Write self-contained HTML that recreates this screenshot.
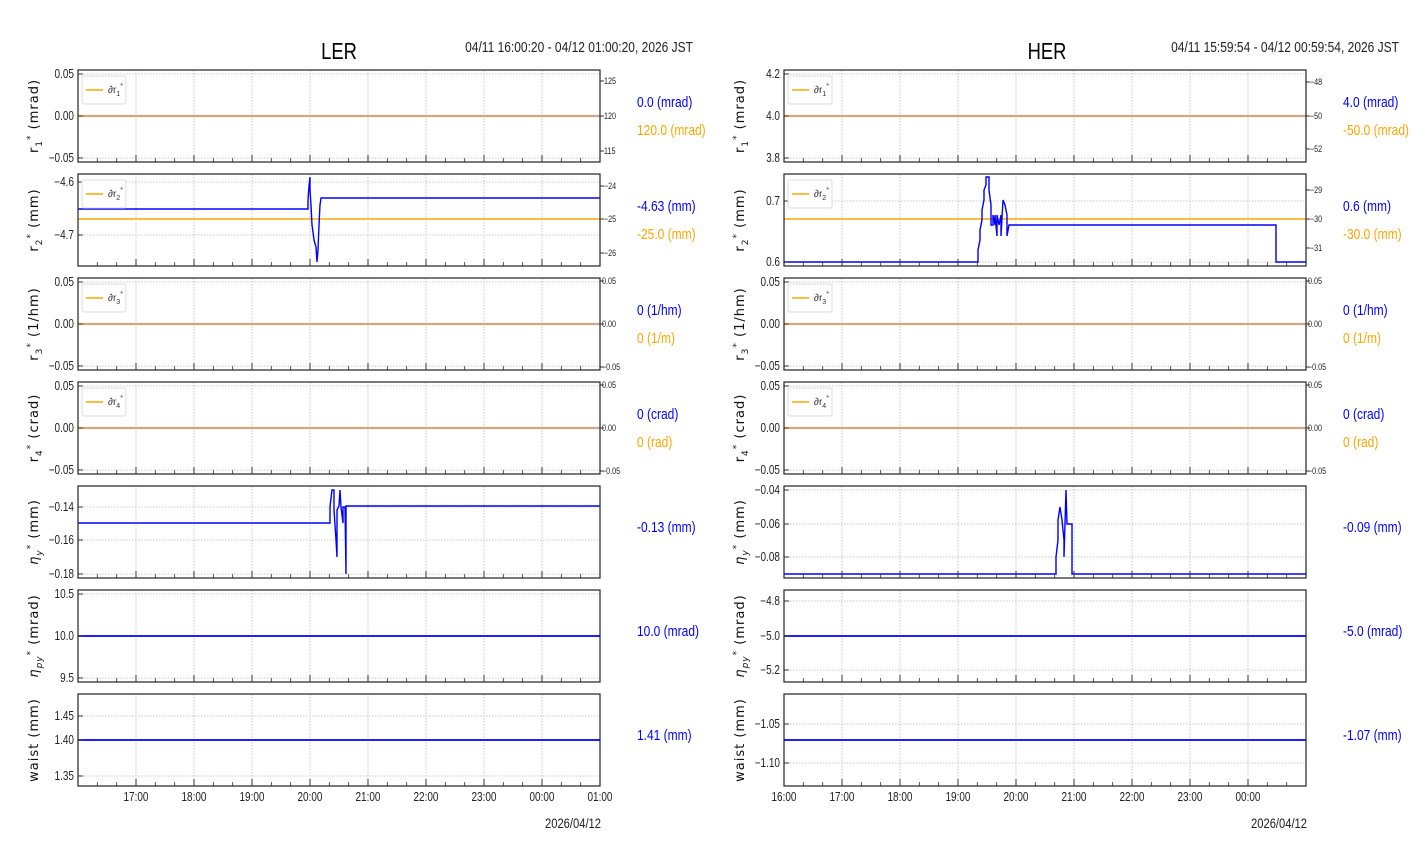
<!DOCTYPE html>
<html><head><meta charset="utf-8"><style>
html,body{margin:0;padding:0;background:#fff;}
svg{display:block;font-family:"Liberation Sans",sans-serif;}
text.t,.t text{font-size:12.5px;fill:#222;}
.e text{transform:scaleX(.8);transform-box:fill-box;transform-origin:right center;}
.m text{transform:scaleX(.8);transform-box:fill-box;transform-origin:center center;}
.st text,text.st{transform:scaleX(.8);transform-box:fill-box;transform-origin:left center;}
.er{transform:scaleX(.8);transform-box:fill-box;transform-origin:right center;}
.mc{transform:scaleX(.8);transform-box:fill-box;transform-origin:center center;}
.s text{font-size:9px;fill:#222;}
.yl{font-size:13px;fill:#111;font-family:"DejaVu Sans","Liberation Sans",sans-serif;letter-spacing:1px;}
.b{font-size:15px;fill:#0000ff;}
.o{font-size:15px;fill:#ffa500;}
.lg{font-size:10px;fill:#333;}
</style></head><body>
<svg id="s" width="1412" height="864" viewBox="0 0 1412 864" xmlns="http://www.w3.org/2000/svg">
<g id="grid"></g>
<text x="339" y="59" text-anchor="middle" class="mc" style="font-size:23px" fill="#000">LER</text>
<text x="693" y="52" text-anchor="end" class="er" style="font-size:15px" fill="#222">04/11 16:00:20 - 04/12 01:00:20, 2026 JST</text>
<text x="1047" y="59" text-anchor="middle" class="mc" style="font-size:23px" fill="#000">HER</text>
<text x="1399" y="52" text-anchor="end" class="er" style="font-size:15px" fill="#222">04/11 15:59:54 - 04/12 00:59:54, 2026 JST</text>

<g fill="none" stroke-width="1.4">
<path d="M78,116H600" stroke="#ffa500" stroke-width="2.5" opacity=".5"/><path d="M78,116H600" stroke="#0000ff" stroke-width="0.8" opacity=".5"/>
<path d="M78,219H600" stroke="#ffa500"/>
<path d="M78,209H308V200L309,186L310,177V190L311,205L312,225L313,232L314,240L316,247L317,262L318,250L319,225L320,205L321,198H600" stroke="#0000ff"/>
<path d="M78,324H600" stroke="#ffa500" stroke-width="2.5" opacity=".5"/><path d="M78,324H600" stroke="#0000ff" stroke-width="0.8" opacity=".5"/>
<path d="M78,428H600" stroke="#ffa500" stroke-width="2.5" opacity=".5"/><path d="M78,428H600" stroke="#0000ff" stroke-width="0.8" opacity=".5"/>
<path d="M78,523H330V507L332,490H334V510L336,540L337,557V510L339,506L340,490L341,507L343,523V507L345,507L346,574V506H600" stroke="#0000ff"/>
<path d="M78,636H600" stroke="#0000ff" stroke-width="1.8"/>
<path d="M78,740H600" stroke="#0000ff" stroke-width="1.8"/>
<path d="M784,116H1306" stroke="#ffa500" stroke-width="2.5" opacity=".5"/><path d="M784,116H1306" stroke="#0000ff" stroke-width="0.8" opacity=".5"/>
<path d="M784,219H1306" stroke="#ffa500"/>
<path d="M784,262H978V250L980,240V230L982,220V210L984,200V190L986,185V177L989,177V190L991,205V225L993,225V215L995,225V215L997,236V215L999,225L1001,215V236L1003,200L1005,205L1007,215V236L1009,225H1276V262H1306" stroke="#0000ff"/>
<path d="M784,324H1306" stroke="#ffa500" stroke-width="2.5" opacity=".5"/><path d="M784,324H1306" stroke="#0000ff" stroke-width="0.8" opacity=".5"/>
<path d="M784,428H1306" stroke="#ffa500" stroke-width="2.5" opacity=".5"/><path d="M784,428H1306" stroke="#0000ff" stroke-width="0.8" opacity=".5"/>
<path d="M784,574H1056V557L1058,540V520L1060,507L1062,520L1064,540V557L1066,490L1067,524H1072V574H1306" stroke="#0000ff"/>
<path d="M784,636H1306" stroke="#0000ff" stroke-width="1.8"/>
<path d="M784,740H1306" stroke="#0000ff" stroke-width="1.8"/>
</g>
<g id="frames"></g>

<g>
<rect x="82" y="76" width="44" height="28" rx="2" fill="#fff" stroke="#ddd"/><path d="M86,90H103" stroke="#ffa500" stroke-width="1.5"/><text x="108" y="93" class="lg">∂r<tspan dy="3" font-size="7">1</tspan><tspan dy="-8" font-size="7">*</tspan></text>
<rect x="82" y="180" width="44" height="28" rx="2" fill="#fff" stroke="#ddd"/><path d="M86,194H103" stroke="#ffa500" stroke-width="1.5"/><text x="108" y="197" class="lg">∂r<tspan dy="3" font-size="7">2</tspan><tspan dy="-8" font-size="7">*</tspan></text>
<rect x="82" y="284" width="44" height="28" rx="2" fill="#fff" stroke="#ddd"/><path d="M86,298H103" stroke="#ffa500" stroke-width="1.5"/><text x="108" y="301" class="lg">∂r<tspan dy="3" font-size="7">3</tspan><tspan dy="-8" font-size="7">*</tspan></text>
<rect x="82" y="388" width="44" height="28" rx="2" fill="#fff" stroke="#ddd"/><path d="M86,402H103" stroke="#ffa500" stroke-width="1.5"/><text x="108" y="405" class="lg">∂r<tspan dy="3" font-size="7">4</tspan><tspan dy="-8" font-size="7">*</tspan></text>
<rect x="788" y="76" width="44" height="28" rx="2" fill="#fff" stroke="#ddd"/><path d="M792,90H809" stroke="#ffa500" stroke-width="1.5"/><text x="814" y="93" class="lg">∂r<tspan dy="3" font-size="7">1</tspan><tspan dy="-8" font-size="7">*</tspan></text>
<rect x="788" y="180" width="44" height="28" rx="2" fill="#fff" stroke="#ddd"/><path d="M792,194H809" stroke="#ffa500" stroke-width="1.5"/><text x="814" y="197" class="lg">∂r<tspan dy="3" font-size="7">2</tspan><tspan dy="-8" font-size="7">*</tspan></text>
<rect x="788" y="284" width="44" height="28" rx="2" fill="#fff" stroke="#ddd"/><path d="M792,298H809" stroke="#ffa500" stroke-width="1.5"/><text x="814" y="301" class="lg">∂r<tspan dy="3" font-size="7">3</tspan><tspan dy="-8" font-size="7">*</tspan></text>
<rect x="788" y="388" width="44" height="28" rx="2" fill="#fff" stroke="#ddd"/><path d="M792,402H809" stroke="#ffa500" stroke-width="1.5"/><text x="814" y="405" class="lg">∂r<tspan dy="3" font-size="7">4</tspan><tspan dy="-8" font-size="7">*</tspan></text>
</g>

<g class="t e" text-anchor="end">
<text x="74" y="78">0.05</text><text x="74" y="120">0.00</text><text x="74" y="162">−0.05</text>
<text x="74" y="186">−4.6</text><text x="74" y="239">−4.7</text>
<text x="74" y="286">0.05</text><text x="74" y="328">0.00</text><text x="74" y="370">−0.05</text>
<text x="74" y="390">0.05</text><text x="74" y="432">0.00</text><text x="74" y="474">−0.05</text>
<text x="74" y="511">−0.14</text><text x="74" y="544">−0.16</text><text x="74" y="578">−0.18</text>
<text x="74" y="598">10.5</text><text x="74" y="640">10.0</text><text x="74" y="682">9.5</text>
<text x="74" y="720">1.45</text><text x="74" y="744">1.40</text><text x="74" y="780">1.35</text>
<text x="780" y="78">4.2</text><text x="780" y="120">4.0</text><text x="780" y="162">3.8</text>
<text x="780" y="205">0.7</text><text x="780" y="266">0.6</text>
<text x="780" y="286">0.05</text><text x="780" y="328">0.00</text><text x="780" y="370">−0.05</text>
<text x="780" y="390">0.05</text><text x="780" y="432">0.00</text><text x="780" y="474">−0.05</text>
<text x="780" y="494">−0.04</text><text x="780" y="528">−0.06</text><text x="780" y="561">−0.08</text>
<text x="780" y="605">−4.8</text><text x="780" y="640">−5.0</text><text x="780" y="674">−5.2</text>
<text x="780" y="728">−1.05</text><text x="780" y="767">−1.10</text>
</g>
<g class="s st">
<text x="604" y="84">125</text><text x="604" y="119">120</text><text x="604" y="154">115</text>
<text x="604" y="189">−24</text><text x="604" y="222">−25</text><text x="604" y="256">−26</text>
<text x="602" y="284">0.05</text><text x="602" y="327">0.00</text><text x="602" y="370">−0.05</text>
<text x="602" y="388">0.05</text><text x="602" y="431">0.00</text><text x="602" y="474">−0.05</text>
<text x="1310" y="85">−48</text><text x="1310" y="119">−50</text><text x="1310" y="152">−52</text>
<text x="1310" y="193">−29</text><text x="1310" y="222">−30</text><text x="1310" y="251">−31</text>
<text x="1308" y="284">0.05</text><text x="1308" y="327">0.00</text><text x="1308" y="370">−0.05</text>
<text x="1308" y="388">0.05</text><text x="1308" y="431">0.00</text><text x="1308" y="474">−0.05</text>
</g>
<g class="t m" text-anchor="middle">
<text x="136" y="801">17:00</text><text x="194" y="801">18:00</text><text x="252" y="801">19:00</text><text x="310" y="801">20:00</text><text x="368" y="801">21:00</text><text x="426" y="801">22:00</text><text x="484" y="801">23:00</text><text x="542" y="801">00:00</text><text x="600" y="801">01:00</text>
<text x="784" y="801">16:00</text><text x="842" y="801">17:00</text><text x="900" y="801">18:00</text><text x="958" y="801">19:00</text><text x="1016" y="801">20:00</text><text x="1074" y="801">21:00</text><text x="1132" y="801">22:00</text><text x="1190" y="801">23:00</text><text x="1248" y="801">00:00</text>
</g>
<g class="t e">
<text x="601" y="828" text-anchor="end" style="font-size:14px">2026/04/12</text>
<text x="1307" y="828" text-anchor="end" style="font-size:14px">2026/04/12</text>
</g>

<g class="yl" text-anchor="middle">
<text transform="translate(38,116) rotate(-90)">r<tspan dy="4" font-size="9">1</tspan><tspan dy="-9" font-size="9">*</tspan><tspan dy="5"> (mrad)</tspan></text>
<text transform="translate(38,220) rotate(-90)">r<tspan dy="4" font-size="9">2</tspan><tspan dy="-9" font-size="9">*</tspan><tspan dy="5"> (mm)</tspan></text>
<text transform="translate(38,324) rotate(-90)">r<tspan dy="4" font-size="9">3</tspan><tspan dy="-9" font-size="9">*</tspan><tspan dy="5"> (1/hm)</tspan></text>
<text transform="translate(38,428) rotate(-90)">r<tspan dy="4" font-size="9">4</tspan><tspan dy="-9" font-size="9">*</tspan><tspan dy="5"> (crad)</tspan></text>
<text transform="translate(38,532) rotate(-90)"><tspan font-style="italic">η</tspan><tspan dy="4" font-size="9" font-style="italic">y</tspan><tspan dy="-9" font-size="9">*</tspan><tspan dy="5"> (mm)</tspan></text>
<text transform="translate(38,636) rotate(-90)"><tspan font-style="italic">η</tspan><tspan dy="4" font-size="9" font-style="italic">py</tspan><tspan dy="-9" font-size="9">*</tspan><tspan dy="5"> (mrad)</tspan></text>
<text transform="translate(38,740) rotate(-90)">waist (mm)</text>
<text transform="translate(744,116) rotate(-90)">r<tspan dy="4" font-size="9">1</tspan><tspan dy="-9" font-size="9">*</tspan><tspan dy="5"> (mrad)</tspan></text>
<text transform="translate(744,220) rotate(-90)">r<tspan dy="4" font-size="9">2</tspan><tspan dy="-9" font-size="9">*</tspan><tspan dy="5"> (mm)</tspan></text>
<text transform="translate(744,324) rotate(-90)">r<tspan dy="4" font-size="9">3</tspan><tspan dy="-9" font-size="9">*</tspan><tspan dy="5"> (1/hm)</tspan></text>
<text transform="translate(744,428) rotate(-90)">r<tspan dy="4" font-size="9">4</tspan><tspan dy="-9" font-size="9">*</tspan><tspan dy="5"> (crad)</tspan></text>
<text transform="translate(744,532) rotate(-90)"><tspan font-style="italic">η</tspan><tspan dy="4" font-size="9" font-style="italic">y</tspan><tspan dy="-9" font-size="9">*</tspan><tspan dy="5"> (mm)</tspan></text>
<text transform="translate(744,636) rotate(-90)"><tspan font-style="italic">η</tspan><tspan dy="4" font-size="9" font-style="italic">py</tspan><tspan dy="-9" font-size="9">*</tspan><tspan dy="5"> (mrad)</tspan></text>
<text transform="translate(744,740) rotate(-90)">waist (mm)</text>
</g>

<g class="st">
<text x="637" y="107" class="b">0.0 (mrad)</text><text x="637" y="135" class="o">120.0 (mrad)</text>
<text x="637" y="211" class="b">-4.63 (mm)</text><text x="637" y="239" class="o">-25.0 (mm)</text>
<text x="637" y="315" class="b">0 (1/hm)</text><text x="637" y="343" class="o">0 (1/m)</text>
<text x="637" y="419" class="b">0 (crad)</text><text x="637" y="447" class="o">0 (rad)</text>
<text x="637" y="532" class="b">-0.13 (mm)</text>
<text x="637" y="636" class="b">10.0 (mrad)</text>
<text x="637" y="740" class="b">1.41 (mm)</text>
<text x="1343" y="107" class="b">4.0 (mrad)</text><text x="1343" y="135" class="o">-50.0 (mrad)</text>
<text x="1343" y="211" class="b">0.6 (mm)</text><text x="1343" y="239" class="o">-30.0 (mm)</text>
<text x="1343" y="315" class="b">0 (1/hm)</text><text x="1343" y="343" class="o">0 (1/m)</text>
<text x="1343" y="419" class="b">0 (crad)</text><text x="1343" y="447" class="o">0 (rad)</text>
<text x="1343" y="532" class="b">-0.09 (mm)</text>
<text x="1343" y="636" class="b">-5.0 (mrad)</text>
<text x="1343" y="740" class="b">-1.07 (mm)</text>
</g>
</svg>
<script>
(function(){
var NS="http://www.w3.org/2000/svg",g=document.getElementById('grid'),f=document.getElementById('frames');
function L(p,x1,y1,x2,y2,st,w,da){var l=document.createElementNS(NS,'line');l.setAttribute('x1',x1);l.setAttribute('y1',y1);l.setAttribute('x2',x2);l.setAttribute('y2',y2);l.setAttribute('stroke',st);l.setAttribute('stroke-width',w);if(da)l.setAttribute('stroke-dasharray',da);p.appendChild(l);}
var tops=[70,174,278,382,486,590,694],H=92;
var hy={L:[[74,116,158],[182,235],[282,324,366],[386,428,470],[507,540,574],[594,636,678],[716,740,776]],
R:[[74,116,158],[201,262],[282,324,366],[386,428,470],[490,524,557],[601,636,670],[724,763]]};
var rt={L:[[81,116,151],[186,219,253],[281,324,367],[385,428,471]],R:[[82,116,149],[190,219,248],[281,324,367],[385,428,471]]};
[['L',78],['R',784]].forEach(function(s){
 var x0=s[1],k=s[0];
 tops.forEach(function(t,i){
  var hx=[];for(var h=0;h<=9;h++){var x=x0+58*h;if(x>x0+1&&x<x0+521)hx.push(x);}
  if(k=='R')hx.push(x0);
  hx.forEach(function(x){L(g,x,t,x,t+H,'#bbb',0.8,'1.5,1.5');L(f,x,t+H,x,t+H-7,'#333',1);});
  for(var m=0;m<27;m++){var x=x0+m*58/3;if(x<x0+521&&m%3)L(f,x,t+H,x,t+H-4,'#333',0.8);}
  hy[k][i].forEach(function(y){L(g,x0,y,x0+522,y,'#bbb',0.8,'1.5,1.5');L(f,x0,y,x0+5,y,'#333',1);});
  if(i<4)rt[k][i].forEach(function(y){L(f,x0+522,y,x0+526,y,'#333',1);});
  var r=document.createElementNS(NS,'rect');r.setAttribute('x',x0);r.setAttribute('y',t);r.setAttribute('width',522);r.setAttribute('height',H);r.setAttribute('fill','none');r.setAttribute('stroke','#222');r.setAttribute('stroke-width','1.2');f.appendChild(r);
 });
});
})();
</script>
</body></html>
